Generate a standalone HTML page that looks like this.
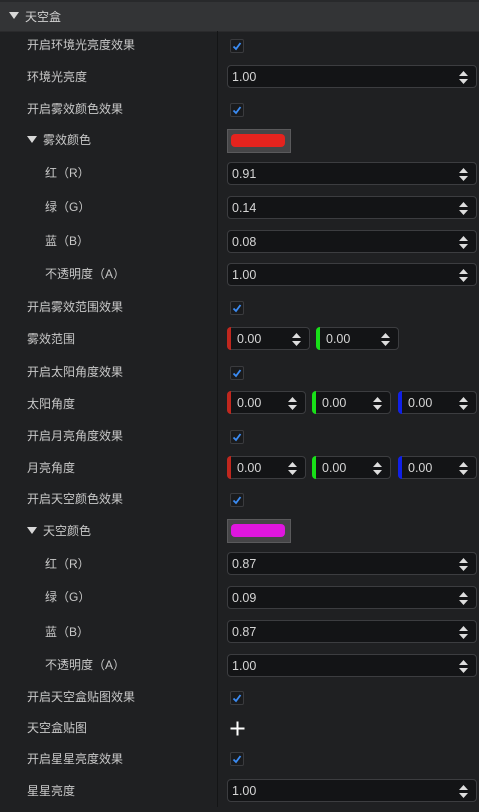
<!DOCTYPE html>
<html><head><meta charset="utf-8"><style>
body{margin:0;width:479px;height:812px;background:#1f2022;overflow:hidden;font-family:"Liberation Sans","Noto Sans CJK SC",sans-serif;font-size:12px;color:#c8c8c8;position:relative}
.top{position:absolute;left:0;top:0;width:479px;height:2px;background:#28292b}
.hdr{position:absolute;left:0;top:2px;width:479px;height:29px;background:#333436;border-bottom:1px solid #2a2a2c}
.hdr span{position:absolute;left:25px;top:6px;font-size:12px;color:#d0d0d0}
.tri{position:absolute;width:0;height:0;border-left:5px solid transparent;border-right:5px solid transparent;border-top:7px solid #d8d8d8}
.vl{position:absolute;left:217px;top:31px;width:1px;height:776px;background:#141516}
.lb{position:absolute;left:27px;line-height:14px;white-space:nowrap}
.cb{position:absolute;left:230px;width:12px;height:12px;border:1px solid #3a3b3e;border-radius:2px;background:#1a1b1d}
.cb svg{position:absolute;left:1px;top:1px}
.in{position:absolute;height:23px;border:1px solid #3c3d40;border-radius:4px;background:#131416;box-sizing:border-box}
.in span{position:absolute;left:4px;top:4px;font-size:12.5px;color:#d6d6d6}
.sp{position:absolute;top:5px;width:9px;height:13px}
.sw{position:absolute;left:227px;width:64px;height:24px;background:#454547;border:1px solid #5a5a5c;box-sizing:border-box}
.sw i{position:absolute;left:3px;top:4px;width:54px;height:13px;border-radius:4px}
.bar{position:absolute;left:-1px;top:-1px;width:4px;height:23px;border-radius:4px 0 0 4px}
</style></head><body>
<div class="top"></div>
<div class="hdr"><div class="tri" style="left:9px;top:10px"></div><span>天空盒</span></div>
<div class="vl"></div>

<!-- svg defs-free helpers inline -->
<div class="lb" style="top:38px">开启环境光亮度效果</div>
<div class="cb" style="top:39px"><svg width="10" height="10"><path d="M1.5 5.5L4 8L8.5 2" stroke="#3b8cf5" stroke-width="1.8" fill="none"/></svg></div>

<div class="lb" style="top:70px">环境光亮度</div>
<div class="in" style="left:227px;top:65px;width:250px"><span>1.00</span><svg class="sp" style="left:231px" viewBox="0 0 9 13"><path d="M0 5L4.5 0L9 5Z M0 8L4.5 13L9 8Z" fill="#ddd"/></svg></div>

<div class="lb" style="top:102px">开启雾效颜色效果</div>
<div class="cb" style="top:103px"><svg width="10" height="10"><path d="M1.5 5.5L4 8L8.5 2" stroke="#3b8cf5" stroke-width="1.8" fill="none"/></svg></div>

<div class="tri" style="left:27px;top:136px"></div>
<div class="lb" style="left:43px;top:133px">雾效颜色</div>
<div class="sw" style="top:129px"><i style="background:#e5231e"></i></div>

<div class="lb" style="left:45px;top:166px">红（R）</div>
<div class="in" style="left:227px;top:162px;width:250px"><span>0.91</span><svg class="sp" style="left:231px" viewBox="0 0 9 13"><path d="M0 5L4.5 0L9 5Z M0 8L4.5 13L9 8Z" fill="#ddd"/></svg></div>
<div class="lb" style="left:45px;top:200px">绿（G）</div>
<div class="in" style="left:227px;top:196px;width:250px"><span>0.14</span><svg class="sp" style="left:231px" viewBox="0 0 9 13"><path d="M0 5L4.5 0L9 5Z M0 8L4.5 13L9 8Z" fill="#ddd"/></svg></div>
<div class="lb" style="left:45px;top:234px">蓝（B）</div>
<div class="in" style="left:227px;top:230px;width:250px"><span>0.08</span><svg class="sp" style="left:231px" viewBox="0 0 9 13"><path d="M0 5L4.5 0L9 5Z M0 8L4.5 13L9 8Z" fill="#ddd"/></svg></div>
<div class="lb" style="left:45px;top:267px">不透明度（A）</div>
<div class="in" style="left:227px;top:263px;width:250px"><span>1.00</span><svg class="sp" style="left:231px" viewBox="0 0 9 13"><path d="M0 5L4.5 0L9 5Z M0 8L4.5 13L9 8Z" fill="#ddd"/></svg></div>

<div class="lb" style="top:300px">开启雾效范围效果</div>
<div class="cb" style="top:301px"><svg width="10" height="10"><path d="M1.5 5.5L4 8L8.5 2" stroke="#3b8cf5" stroke-width="1.8" fill="none"/></svg></div>

<div class="lb" style="top:332px">雾效范围</div>
<div class="in" style="left:227px;top:327px;width:83px"><div class="bar" style="background:#c0271e"></div><span style="left:9px">0.00</span><svg class="sp" style="left:64px" viewBox="0 0 9 13"><path d="M0 5L4.5 0L9 5Z M0 8L4.5 13L9 8Z" fill="#ddd"/></svg></div>
<div class="in" style="left:316px;top:327px;width:83px"><div class="bar" style="background:#18e018"></div><span style="left:9px">0.00</span><svg class="sp" style="left:64px" viewBox="0 0 9 13"><path d="M0 5L4.5 0L9 5Z M0 8L4.5 13L9 8Z" fill="#ddd"/></svg></div>

<div class="lb" style="top:365px">开启太阳角度效果</div>
<div class="cb" style="top:366px"><svg width="10" height="10"><path d="M1.5 5.5L4 8L8.5 2" stroke="#3b8cf5" stroke-width="1.8" fill="none"/></svg></div>

<div class="lb" style="top:397px">太阳角度</div>
<div class="in" style="left:227px;top:391px;width:79px"><div class="bar" style="background:#c0271e"></div><span style="left:9px">0.00</span><svg class="sp" style="left:60px" viewBox="0 0 9 13"><path d="M0 5L4.5 0L9 5Z M0 8L4.5 13L9 8Z" fill="#ddd"/></svg></div>
<div class="in" style="left:312px;top:391px;width:79px"><div class="bar" style="background:#18e018"></div><span style="left:9px">0.00</span><svg class="sp" style="left:60px" viewBox="0 0 9 13"><path d="M0 5L4.5 0L9 5Z M0 8L4.5 13L9 8Z" fill="#ddd"/></svg></div>
<div class="in" style="left:398px;top:391px;width:79px"><div class="bar" style="background:#1020e8"></div><span style="left:9px">0.00</span><svg class="sp" style="left:60px" viewBox="0 0 9 13"><path d="M0 5L4.5 0L9 5Z M0 8L4.5 13L9 8Z" fill="#ddd"/></svg></div>

<div class="lb" style="top:429px">开启月亮角度效果</div>
<div class="cb" style="top:430px"><svg width="10" height="10"><path d="M1.5 5.5L4 8L8.5 2" stroke="#3b8cf5" stroke-width="1.8" fill="none"/></svg></div>

<div class="lb" style="top:461px">月亮角度</div>
<div class="in" style="left:227px;top:456px;width:79px"><div class="bar" style="background:#c0271e"></div><span style="left:9px">0.00</span><svg class="sp" style="left:60px" viewBox="0 0 9 13"><path d="M0 5L4.5 0L9 5Z M0 8L4.5 13L9 8Z" fill="#ddd"/></svg></div>
<div class="in" style="left:312px;top:456px;width:79px"><div class="bar" style="background:#18e018"></div><span style="left:9px">0.00</span><svg class="sp" style="left:60px" viewBox="0 0 9 13"><path d="M0 5L4.5 0L9 5Z M0 8L4.5 13L9 8Z" fill="#ddd"/></svg></div>
<div class="in" style="left:398px;top:456px;width:79px"><div class="bar" style="background:#1020e8"></div><span style="left:9px">0.00</span><svg class="sp" style="left:60px" viewBox="0 0 9 13"><path d="M0 5L4.5 0L9 5Z M0 8L4.5 13L9 8Z" fill="#ddd"/></svg></div>

<div class="lb" style="top:492px">开启天空颜色效果</div>
<div class="cb" style="top:493px"><svg width="10" height="10"><path d="M1.5 5.5L4 8L8.5 2" stroke="#3b8cf5" stroke-width="1.8" fill="none"/></svg></div>

<div class="tri" style="left:27px;top:527px"></div>
<div class="lb" style="left:43px;top:524px">天空颜色</div>
<div class="sw" style="top:519px"><i style="background:#df16de"></i></div>

<div class="lb" style="left:45px;top:557px">红（R）</div>
<div class="in" style="left:227px;top:552px;width:250px"><span>0.87</span><svg class="sp" style="left:231px" viewBox="0 0 9 13"><path d="M0 5L4.5 0L9 5Z M0 8L4.5 13L9 8Z" fill="#ddd"/></svg></div>
<div class="lb" style="left:45px;top:590px">绿（G）</div>
<div class="in" style="left:227px;top:586px;width:250px"><span>0.09</span><svg class="sp" style="left:231px" viewBox="0 0 9 13"><path d="M0 5L4.5 0L9 5Z M0 8L4.5 13L9 8Z" fill="#ddd"/></svg></div>
<div class="lb" style="left:45px;top:625px">蓝（B）</div>
<div class="in" style="left:227px;top:620px;width:250px"><span>0.87</span><svg class="sp" style="left:231px" viewBox="0 0 9 13"><path d="M0 5L4.5 0L9 5Z M0 8L4.5 13L9 8Z" fill="#ddd"/></svg></div>
<div class="lb" style="left:45px;top:658px">不透明度（A）</div>
<div class="in" style="left:227px;top:654px;width:250px"><span>1.00</span><svg class="sp" style="left:231px" viewBox="0 0 9 13"><path d="M0 5L4.5 0L9 5Z M0 8L4.5 13L9 8Z" fill="#ddd"/></svg></div>

<div class="lb" style="top:690px">开启天空盒贴图效果</div>
<div class="cb" style="top:691px"><svg width="10" height="10"><path d="M1.5 5.5L4 8L8.5 2" stroke="#3b8cf5" stroke-width="1.8" fill="none"/></svg></div>

<div class="lb" style="top:721px">天空盒贴图</div>
<svg style="position:absolute;left:230px;top:721px" width="15" height="15"><path d="M7.5 0.5V14.5M0.5 7.5H14.5" stroke="#fff" stroke-width="2"/></svg>

<div class="lb" style="top:752px">开启星星亮度效果</div>
<div class="cb" style="top:752px"><svg width="10" height="10"><path d="M1.5 5.5L4 8L8.5 2" stroke="#3b8cf5" stroke-width="1.8" fill="none"/></svg></div>

<div class="lb" style="top:784px">星星亮度</div>
<div class="in" style="left:227px;top:779px;width:250px"><span>1.00</span><svg class="sp" style="left:231px" viewBox="0 0 9 13"><path d="M0 5L4.5 0L9 5Z M0 8L4.5 13L9 8Z" fill="#ddd"/></svg></div>
</body></html>
